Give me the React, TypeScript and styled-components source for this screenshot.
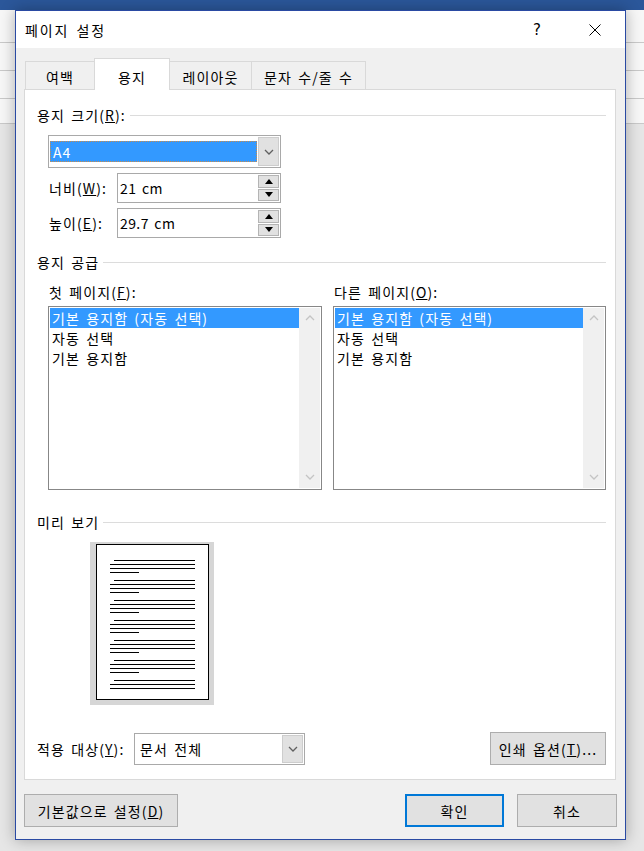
import React from 'react';
import styled, { createGlobalStyle } from 'styled-components';

const GlobalStyle = createGlobalStyle`
  html, body { margin: 0; padding: 0; }
  body {
    width: 644px; height: 851px; overflow: hidden;
    font-family: "Noto Sans CJK KR", "Noto Sans", sans-serif;
    font-size: 14px; color: #000;
    letter-spacing: 1.1px;
    word-spacing: 2px;
  }
  * { box-sizing: border-box; }
`;

const Desktop = styled.div`
  width: 644px;
  height: 851px;
  padding: 10px 0 0 15px;
  background:
    linear-gradient(#2b579a, #2b579a) 0 0 / 100% 10px no-repeat,
    linear-gradient(#c9c9c9, #c9c9c9) 0 42px / 100% 1px no-repeat,
    linear-gradient(#c9c9c9, #c9c9c9) 0 70px / 100% 1px no-repeat,
    linear-gradient(#c9c9c9, #c9c9c9) 0 98px / 100% 1px no-repeat,
    linear-gradient(#c9c9c9, #c9c9c9) 0 123px / 100% 1px no-repeat,
    linear-gradient(#f7f7f7, #f7f7f7) 0 10px / 100% 113px no-repeat,
    #e6e6e6;
`;

const Dialog = styled.div`
  width: 611px;
  height: 830px;
  border: 1px solid #2a4aa3;
  background: #f0f0f0;
  box-shadow: 0 0 14px rgba(0, 0, 0, 0.3);
  display: flex;
  flex-direction: column;
`;

const TitleBar = styled.div`
  height: 37px;
  background: #fff;
  display: flex;
  align-items: center;
  padding-left: 9px;
`;

const TitleText = styled.div`
  flex: 1;
  font-size: 14px;
  padding-top: 1px;
  letter-spacing: 1.9px;
`;

const TitleButton = styled.div<{ $mr?: number }>`
  width: 46px;
  height: 37px;
  display: flex;
  align-items: center;
  justify-content: center;
  margin-right: ${p => p.$mr ?? 0}px;
  font-family: "DejaVu Sans", sans-serif;
  font-size: 15px;
  letter-spacing: 0;
`;

const Body = styled.div`
  flex: 1;
  display: flex;
  flex-direction: column;
  padding: 10px 9px 0 8px;
`;

const TabStrip = styled.div`
  display: flex;
  align-items: flex-end;
  height: 32px;
  padding-left: 1px;
  margin-bottom: -1px;
  position: relative;
  z-index: 1;
`;

const Tab = styled.div<{ $active?: boolean; $w: number; $first?: boolean }>`
  width: ${p => p.$w}px;
  height: ${p => (p.$active ? 32 : 29)}px;
  margin-left: ${p => (p.$first ? 0 : -1)}px;
  border: 1px solid #d9d9d9;
  border-bottom: ${p => (p.$active ? 'none' : '1px solid #d9d9d9')};
  background: ${p => (p.$active ? '#fff' : '#f0f0f0')};
  position: relative;
  z-index: ${p => (p.$active ? 2 : 1)};
  display: flex;
  align-items: center;
  justify-content: center;
  padding-top: ${p => (p.$active ? 4 : 2)}px;
  white-space: nowrap;
`;

const Panel = styled.div`
  height: 691px;
  border: 1px solid #d9d9d9;
  background: #fff;
  padding: 0 9px 0 12px;
  display: flex;
  flex-direction: column;
`;

const SectionHeader = styled.div<{ $mt: number }>`
  display: flex;
  align-items: center;
  height: 16px;
  gap: 4px;
  margin-top: ${p => p.$mt}px;
  white-space: nowrap;
  &::after {
    content: '';
    flex: 1;
    height: 1px;
    background: #dcdcdc;
    margin-top: 1px;
  }
`;

const Combo = styled.div<{ $w: number; $h: number; $ml: number; $mt: number }>`
  width: ${p => p.$w}px;
  height: ${p => p.$h}px;
  margin-left: ${p => p.$ml}px;
  margin-top: ${p => p.$mt}px;
  border: 1px solid #a9a9a9;
  background: #fff;
  padding: 1px;
  display: flex;
  flex-shrink: 0;
`;

const ComboField = styled.div`
  flex: 1;
  display: flex;
  align-items: center;
  padding: 0 1px 0 0;
`;

const SelectedValue = styled.div`
  width: 100%;
  height: 21px;
  background: #3399ff;
  color: #fff;
  border: 1px dotted #c98b4a;
  display: flex;
  align-items: center;
  padding-left: 2px;
`;

const PlainValue = styled.div`
  padding-left: 4px;
  display: flex;
  align-items: center;
`;

const DropButton = styled.div`
  width: 21px;
  background: #e1e1e1;
  border: 1px solid #cdcdcd;
  display: flex;
  align-items: center;
  justify-content: center;
`;

const FieldRow = styled.div<{ $mt: number }>`
  display: flex;
  align-items: center;
  margin-top: ${p => p.$mt}px;
  padding-left: 12px;
`;

const FieldLabel = styled.div<{ $w: number }>`
  width: ${p => p.$w}px;
  flex-shrink: 0;
  white-space: nowrap;
`;

const SpinBox = styled.div`
  width: 164px;
  height: 30px;
  border: 1px solid #a9a9a9;
  background: #fff;
  display: flex;
  padding: 1px 1px 1px 0;
`;

const SpinText = styled.div`
  flex: 1;
  display: flex;
  align-items: center;
  padding-left: 2px;
  letter-spacing: 0.4px;
`;

const SpinButtons = styled.div`
  width: 21px;
  display: flex;
  flex-direction: column;
  gap: 1px;
`;

const SpinButton = styled.div`
  flex: 1;
  background: #e1e1e1;
  border: 1px solid #b4b4b4;
  display: flex;
  align-items: center;
  justify-content: center;
`;

const ListsGrid = styled.div`
  display: grid;
  grid-template-columns: 274px 273px;
  column-gap: 11px;
  margin-left: 11px;
  margin-top: 14px;
`;

const ListColumn = styled.div`
  display: flex;
  flex-direction: column;
`;

const ListLabel = styled.div`
  height: 16px;
  display: flex;
  align-items: center;
  padding-left: 1px;
  margin-bottom: 6px;
  white-space: nowrap;
`;

const ListBox = styled.div`
  height: 184px;
  border: 1px solid #878787;
  padding: 1px;
  display: flex;
  background: #fff;
`;

const ListItems = styled.div`
  flex: 1;
  display: flex;
  flex-direction: column;
`;

const ListItem = styled.div<{ $selected?: boolean }>`
  height: 20px;
  display: flex;
  align-items: center;
  padding-left: 2px;
  white-space: nowrap;
  background: ${p => (p.$selected ? '#3399ff' : 'transparent')};
  color: ${p => (p.$selected ? '#fff' : '#000')};
`;

const ScrollBar = styled.div`
  width: 21px;
  background: #f0f0f0;
  display: flex;
  flex-direction: column;
  justify-content: space-between;
  align-items: center;
  padding: 7px 0 8px;
`;

const PreviewFrame = styled.div`
  width: 124px;
  height: 163px;
  margin: 12px 0 0 53px;
  background: #d6d6d6;
  padding: 2px 5px 5px 6px;
`;

const Page = styled.div`
  width: 113px;
  height: 156px;
  border: 1px solid #000;
  background: #fff;
  padding: 15px 0 0 13px;
  display: flex;
  flex-direction: column;
  gap: 7px;
`;

const Paragraph = styled.div`
  display: flex;
  flex-direction: column;
  gap: 3px;
`;

const TextLine = styled.div<{ $kind: 'first' | 'full' | 'short' }>`
  height: 1px;
  background: #000;
  margin-left: ${p => (p.$kind === 'first' ? 4 : 0)}px;
  width: ${p => (p.$kind === 'first' ? 81 : p.$kind === 'full' ? 85 : 29)}px;
`;

const ApplyRow = styled.div`
  display: flex;
  align-items: flex-start;
  margin-top: 27px;
  height: 33px;
`;

const ApplyLabel = styled.div`
  width: 97px;
  height: 33px;
  display: flex;
  align-items: center;
  padding-top: 1px;
  white-space: nowrap;
`;

const Spacer = styled.div`
  flex: 1;
`;

const Button = styled.div<{ $w: number; $default?: boolean }>`
  width: ${p => p.$w}px;
  height: 33px;
  background: #e1e1e1;
  border: ${p => (p.$default ? '2px solid #0078d7' : '1px solid #adadad')};
  display: flex;
  align-items: center;
  justify-content: center;
  white-space: nowrap;
  flex-shrink: 0;
`;

const Footer = styled.div`
  display: flex;
  align-items: center;
  margin-top: 14px;
  margin-right: -1px;
  gap: 13px;
`;

const Chevron = ({ up, color = '#c4c4c4', size = 10 }: { up?: boolean; color?: string; size?: number }) => (
  <svg width={size} height={6} viewBox="0 0 10 6">
    <polyline
      points={up ? '1,5 5,1 9,5' : '1,1 5,5 9,1'}
      fill="none"
      stroke={color}
      strokeWidth="1.3"
    />
  </svg>
);

const Triangle = ({ up }: { up?: boolean }) => (
  <svg width="8" height="5" viewBox="0 0 8 5">
    <polygon points={up ? '0,5 4,0 8,5' : '0,0 8,0 4,5'} fill="#000" />
  </svg>
);

const CloseIcon = () => (
  <svg width="12" height="12" viewBox="0 0 12 12">
    <line x1="0.5" y1="0.5" x2="11.5" y2="11.5" stroke="#000" strokeWidth="1" />
    <line x1="11.5" y1="0.5" x2="0.5" y2="11.5" stroke="#000" strokeWidth="1" />
  </svg>
);

const trayItems = ['기본 용지함 (자동 선택)', '자동 선택', '기본 용지함'];

const paragraphs = [4, 4, 4, 4, 4, 4, 3];

const TrayList = () => (
  <ListBox>
    <ListItems>
      {trayItems.map((t, i) => (
        <ListItem key={t} $selected={i === 0}>
          {t}
        </ListItem>
      ))}
    </ListItems>
    <ScrollBar>
      <Chevron up />
      <Chevron />
    </ScrollBar>
  </ListBox>
);

export default function App() {
  return (
    <>
      <GlobalStyle />
      <Desktop>
        <Dialog>
          <TitleBar>
            <TitleText>페이지 설정</TitleText>
            <TitleButton $mr={12}>?</TitleButton>
            <TitleButton $mr={7}>
              <CloseIcon />
            </TitleButton>
          </TitleBar>
          <Body>
            <TabStrip>
              <Tab $w={70} $first>여백</Tab>
              <Tab $w={76} $active>용지</Tab>
              <Tab $w={83}>레이아웃</Tab>
              <Tab $w={115}>문자 수/줄 수</Tab>
            </TabStrip>
            <Panel>
              <SectionHeader $mt={17}>
                <span>
                  용지 크기(<u>R</u>):
                </span>
              </SectionHeader>
              <Combo $w={233} $h={33} $ml={11} $mt={12}>
                <ComboField>
                  <SelectedValue>A4</SelectedValue>
                </ComboField>
                <DropButton>
                  <Chevron color="#606060" size={10} />
                </DropButton>
              </Combo>
              <FieldRow $mt={5}>
                <FieldLabel $w={68}>
                  너비(<u>W</u>):
                </FieldLabel>
                <SpinBox>
                  <SpinText>21 cm</SpinText>
                  <SpinButtons>
                    <SpinButton>
                      <Triangle up />
                    </SpinButton>
                    <SpinButton>
                      <Triangle />
                    </SpinButton>
                  </SpinButtons>
                </SpinBox>
              </FieldRow>
              <FieldRow $mt={5}>
                <FieldLabel $w={68}>
                  높이(<u>E</u>):
                </FieldLabel>
                <SpinBox>
                  <SpinText>29.7 cm</SpinText>
                  <SpinButtons>
                    <SpinButton>
                      <Triangle up />
                    </SpinButton>
                    <SpinButton>
                      <Triangle />
                    </SpinButton>
                  </SpinButtons>
                </SpinBox>
              </FieldRow>
              <SectionHeader $mt={16}>
                <span>용지 공급</span>
              </SectionHeader>
              <ListsGrid>
                <ListColumn>
                  <ListLabel>
                    첫 페이지(<u>F</u>):
                  </ListLabel>
                  <TrayList />
                </ListColumn>
                <ListColumn>
                  <ListLabel>
                    다른 페이지(<u>O</u>):
                  </ListLabel>
                  <TrayList />
                </ListColumn>
              </ListsGrid>
              <SectionHeader $mt={24}>
                <span>미리 보기</span>
              </SectionHeader>
              <PreviewFrame>
                <Page>
                  {paragraphs.map((n, pi) => (
                    <Paragraph key={pi}>
                      {Array.from({ length: n }).map((_, li) => (
                        <TextLine
                          key={li}
                          $kind={li === 0 ? 'first' : li === 3 ? 'short' : 'full'}
                        />
                      ))}
                    </Paragraph>
                  ))}
                </Page>
              </PreviewFrame>
              <ApplyRow>
                <ApplyLabel>
                  적용 대상(<u>Y</u>):
                </ApplyLabel>
                <Combo $w={171} $h={32} $ml={0} $mt={1}>
                  <ComboField>
                    <PlainValue>문서 전체</PlainValue>
                  </ComboField>
                  <DropButton>
                    <Chevron color="#606060" size={10} />
                  </DropButton>
                </Combo>
                <Spacer />
                <Button $w={116}>
                  인쇄 옵션(<u>T</u>)...
                </Button>
              </ApplyRow>
            </Panel>
            <Footer>
              <Button $w={154}>
                기본값으로 설정(<u>D</u>)
              </Button>
              <Spacer />
              <Button $w={99} $default>
                확인
              </Button>
              <Button $w={100}>취소</Button>
            </Footer>
          </Body>
        </Dialog>
      </Desktop>
    </>
  );
}
